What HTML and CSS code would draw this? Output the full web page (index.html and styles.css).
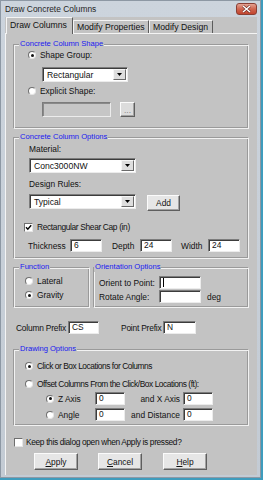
FILE: index.html
```html
<!DOCTYPE html>
<html lang="en">
<head>
    <meta charset="UTF-8">
    <title>Draw Concrete Columns</title>
    <link rel="stylesheet" href="styles.css">
</head>
<body>
<div class="window">
    <div class="titlebar">
        <span class="title">Draw Concrete Columns</span>
        <span class="close">
            <svg width="11" height="8" viewBox="0 0 11 8">
                <path d="M2 1 L9 7 M9 1 L2 7" stroke="#6b2a22" stroke-width="2.6"/>
                <path d="M2 1 L9 7 M9 1 L2 7" stroke="#fff" stroke-width="1.5"/>
            </svg>
        </span>
    </div>
    <div class="client">
        <div class="tabs">
            <div class="tab active tab-draw">Draw Columns</div>
            <div class="tab tab-props">Modify Properties</div>
            <div class="tab tab-design">Modify Design</div>
        </div>
        <div class="panel">
            <!-- shape -->
            <fieldset class="group shape-group">
                <legend>Concrete Column Shape</legend>
                <div class="option"><span class="radio on"></span>Shape Group:</div>
                <div class="select shape-select"><span class="value">Rectangular</span><span class="arrow"><svg width="5" height="3" viewBox="0 0 5 3"><path d="M0 0 H5 L2.5 3 Z" fill="#000"/></svg></span></div>
                <div class="option explicit"><span class="radio"></span>Explicit Shape:</div>
                <div class="explicit-row">
                    <span class="field disabled explicit-field"></span>
                    <span class="btn dots">...</span>
                </div>
            </fieldset>

            <!-- options -->
            <fieldset class="group options-group">
                <legend>Concrete Column Options</legend>
                <div class="caption">Material:</div>
                <div class="select wide-select material"><span class="value">Conc3000NW</span><span class="arrow"><svg width="5" height="3" viewBox="0 0 5 3"><path d="M0 0 H5 L2.5 3 Z" fill="#000"/></svg></span></div>
                <div class="caption rules-caption">Design Rules:</div>
                <div class="rules-row">
                    <div class="select wide-select"><span class="value">Typical</span><span class="arrow"><svg width="5" height="3" viewBox="0 0 5 3"><path d="M0 0 H5 L2.5 3 Z" fill="#000"/></svg></span></div>
                    <span class="btn add-btn">Add</span>
                </div>
                <div class="check-row">
                    <span class="checkbox"><svg width="7" height="7" viewBox="0 0 7 7"><path d="M1 3.2 L2.8 5.2 L6.2 1.2" stroke="#000" stroke-width="1.4" fill="none"/></svg></span>
                    <span class="tight">Rectangular Shear Cap (in)</span>
                </div>
                <div class="dims-row">
                    <span class="dim-label thickness">Thickness</span>
                    <span class="field dim">6</span>
                    <span class="dim-label depth">Depth</span>
                    <span class="field dim">24</span>
                    <span class="dim-label width">Width</span>
                    <span class="field dim">24</span>
                </div>
            </fieldset>

            <!-- function / orientation -->
            <div class="pair">
                <fieldset class="group function-group">
                    <legend>Function</legend>
                    <div class="option"><span class="radio"></span>Lateral</div>
                    <div class="option gravity"><span class="radio on"></span>Gravity</div>
                </fieldset>
                <fieldset class="group orient-group">
                    <legend>Orientation Options</legend>
                    <div class="orient-row">
                        <span class="orient-label">Orient to Point:</span>
                        <span class="field orient-field"><span class="caret"></span></span>
                    </div>
                    <div class="orient-row rotate">
                        <span class="orient-label">Rotate Angle:</span>
                        <span class="field orient-field"></span>
                        <span class="unit">deg</span>
                    </div>
                </fieldset>
            </div>

            <div class="prefix-row">
                <span class="prefix-label column-prefix">Column Prefix</span>
                <span class="field prefix-field">CS</span>
                <span class="prefix-label point-prefix">Point Prefix</span>
                <span class="field point-field">N</span>
            </div>

            <!-- drawing -->
            <fieldset class="group drawing-group">
                <legend>Drawing Options</legend>
                <div class="option"><span class="radio on"></span><span class="tighter">Click or Box Locations for Columns</span></div>
                <div class="option offset"><span class="radio"></span><span class="tighter">Offset Columns From the Click/Box Locations (ft):</span></div>
                <div class="offset-row">
                    <div class="option sub-option"><span class="radio on"></span>Z Axis</div>
                    <span class="field offset-field">0</span>
                    <span class="offset-label">and X Axis</span>
                    <span class="field offset-field">0</span>
                </div>
                <div class="offset-row angle-row">
                    <div class="option sub-option"><span class="radio"></span>Angle</div>
                    <span class="field offset-field">0</span>
                    <span class="offset-label">and Distance</span>
                    <span class="field offset-field">0</span>
                </div>
            </fieldset>

            <div class="keep-row">
                <span class="checkbox"></span>
                <span class="tight">Keep this dialog open when Apply is pressed?</span>
            </div>

            <div class="button-row">
                <span class="btn action"><u>A</u>pply</span>
                <span class="btn action"><u>C</u>ancel</span>
                <span class="btn action"><u>H</u>elp</span>
            </div>
        </div>
    </div>
</div>
</body>
</html>
```

FILE: styles.css
```css
/* dialog window */
* {
    box-sizing: border-box;
}
body {
    margin: 0;
    background: #3e9cbd;
    font-family: "Liberation Sans", Arial, sans-serif;
    font-size: 8.4px;
    color: #111;
}
.window {
    width: 261px;
    height: 478px;
    display: flex;
    flex-direction: column;
    background: linear-gradient(#ccd4dd, #c3cbd4);
    border: 1px solid #8d98a4;
    padding: 0 3px 2px 4px;
}
.titlebar {
    height: 16px;
    display: flex;
    align-items: center;
    justify-content: space-between;
}
.title {
    font-size: 8.4px;
    color: #262626;
}
.close {
    width: 21px;
    height: 12px;
    display: flex;
    align-items: center;
    justify-content: center;
    border: 1px solid #8a3f34;
    border-radius: 3px;
    background: linear-gradient(#e4a393, #cf6550 50%, #c2452f);
}
.client {
    flex: 1;
    background: #c3c3c3;
    display: flex;
    flex-direction: column;
}

/* tabs */
.tabs {
    display: flex;
    align-items: flex-end;
    height: 16px;
    padding-left: 1px;
}
.tab {
    height: 13px;
    padding-left: 3px;
    border-top: 1px solid #f4f4f4;
    border-left: 1px solid #f4f4f4;
    border-right: 1px solid #5c5c5c;
    font-size: 8.7px;
    line-height: 12px;
    white-space: nowrap;
}
.tab.active {
    height: 17px;
    margin-bottom: -1px;
    background: #c3c3c3;
    line-height: 14px;
    position: relative;
}
.tab-draw { width: 67px; }
.tab-props { width: 76px; }
.tab-design { width: 64px; }

.panel {
    flex: 1;
    border-top: 1px solid #f4f4f4;
    border-left: 1px solid #f4f4f4;
    padding: 5px 0 0 7px;
    display: flex;
    flex-direction: column;
    align-items: flex-start;
}

/* group boxes */
.group {
    margin: 0;
    padding: 0;
    min-width: 0;
    width: 236px;
    border: 1px solid;
    border-color: #9a9a9a #f2f2f2 #f2f2f2 #9a9a9a;
    box-shadow: inset 1px 1px 0 #f2f2f2, inset -1px -1px 0 #9a9a9a;
}
.group legend {
    padding: 0 1px;
    font-size: 7.6px;
    line-height: 10px;
    color: #1818f0;
    background: #c3c3c3;
}

/* controls */
.option {
    display: flex;
    align-items: center;
    gap: 4px;
    height: 10px;
    line-height: 10px;
    white-space: nowrap;
}
.radio {
    width: 8px;
    height: 8px;
    flex: none;
    border-radius: 50%;
    background: #fff;
    border: 1px solid;
    border-color: #6f6f6f #e6e6e6 #e6e6e6 #6f6f6f;
    display: flex;
    align-items: center;
    justify-content: center;
}
.radio.on::after {
    content: "";
    width: 3px;
    height: 3px;
    border-radius: 50%;
    background: #111;
}
.checkbox {
    width: 9px;
    height: 9px;
    flex: none;
    background: #fff;
    border: 1px solid;
    border-color: #6f6f6f #e6e6e6 #e6e6e6 #6f6f6f;
    display: flex;
    align-items: center;
    justify-content: center;
}
.field {
    display: block;
    height: 13px;
    background: #fff;
    border: 1px solid;
    border-color: #7c7c7c #ececec #ececec #7c7c7c;
    box-shadow: inset 1px 1px 0 #3c3c3c;
    padding-left: 3px;
    line-height: 11px;
    flex: none;
}
.field.disabled {
    background: #c6c6c6;
    box-shadow: inset 1px 1px 0 #8a8a8a;
}
.select {
    display: flex;
    height: 15px;
    background: #fff;
    border: 1px solid;
    border-color: #7c7c7c #ececec #ececec #7c7c7c;
    box-shadow: inset 1px 1px 0 #3c3c3c;
    padding: 1px;
}
.select .value {
    flex: 1;
    padding-left: 3px;
    font-size: 8.6px;
    line-height: 12px;
}
.select .arrow {
    width: 13px;
    background: #dedede;
    border: 1px solid;
    border-color: #f6f6f6 #6a6a6a #6a6a6a #f6f6f6;
    display: flex;
    align-items: center;
    justify-content: center;
}
.btn {
    display: flex;
    align-items: center;
    justify-content: center;
    background: #e6e6e6;
    border: 1px solid;
    border-color: #fbfbfb #5e5e5e #5e5e5e #fbfbfb;
    box-shadow: inset -1px -1px 0 #a2a2a2;
    font-size: 8.4px;
}
.tight {
    letter-spacing: -0.35px;
}
.tighter {
    letter-spacing: -0.45px;
}

/* shape group */
.shape-group {
    padding: 1px 0 11px 14px;
}
.shape-group legend {
    margin-left: -9px;
}
.shape-select {
    width: 86px;
    margin: 7px 0 0 14px;
}
.explicit {
    margin-top: 4px;
}
.explicit-row {
    display: flex;
    gap: 9px;
    margin: 6px 0 0 14px;
}
.explicit-field {
    width: 69px;
    height: 15px;
}
.dots {
    width: 15px;
    height: 15px;
    color: #8a8a8a;
    background: #dcdcdc;
}

/* options group */
.options-group {
    margin-top: 3px;
    padding: 2px 0 6px 10px;
}
.options-group legend {
    margin-left: -5px;
}
.caption {
    height: 10px;
    line-height: 10px;
    margin-left: 5px;
}
.material {
    margin: 4px 0 0 5px;
}
.wide-select {
    width: 107px;
}
.rules-caption {
    margin-top: 6px;
}
.rules-row {
    display: flex;
    align-items: flex-start;
    margin: 5px 0 0 5px;
}
.add-btn {
    width: 33px;
    height: 16px;
    margin: 1px 0 0 11px;
}
.check-row {
    display: flex;
    align-items: center;
    gap: 4px;
    height: 10px;
    margin-top: 11px;
}
.dims-row {
    display: flex;
    align-items: center;
    height: 13px;
    margin: 7px 0 0 4px;
}
.dim {
    width: 32px;
}
.thickness { width: 42px; }
.depth { width: 28px; margin-left: 10px; }
.width { width: 27px; margin-left: 9px; }

/* function / orientation */
.pair {
    display: flex;
    gap: 3px;
    margin-top: 3px;
}
.function-group {
    width: 77px;
    padding: 4px 0 7px 11px;
}
.function-group legend {
    margin-left: -6px;
}
.gravity {
    margin-top: 4px;
}
.orient-group {
    width: 156px;
    padding: 4px 0 4px 5px;
}
.orient-group legend {
    margin-left: -5px;
}
.orient-row {
    display: flex;
    align-items: center;
    height: 13px;
}
.orient-row.rotate {
    margin-top: 1px;
}
.orient-label {
    width: 60px;
}
.orient-field {
    width: 42px;
}
.caret {
    display: block;
    width: 1px;
    height: 9px;
    margin-top: 1px;
    background: #000;
}
.unit {
    margin-left: 6px;
}

/* prefixes */
.prefix-row {
    display: flex;
    align-items: center;
    height: 13px;
    margin-top: 13px;
    padding-left: 3px;
}
.column-prefix { width: 52px; letter-spacing: -0.2px; }
.prefix-field { width: 31px; }
.point-prefix { width: 42px; margin-left: 22px; letter-spacing: -0.2px; }
.point-field { width: 33px; }

/* drawing options */
.drawing-group {
    margin-top: 10px;
    padding: 7px 0 4px 11px;
}
.drawing-group legend {
    margin-left: -6px;
}
.offset {
    margin-top: 8px;
}
.offset-row {
    display: flex;
    align-items: center;
    height: 13px;
    margin: 3px 0 0 21px;
}
.angle-row {
    margin-top: 3px;
}
.sub-option {
    width: 49px;
}
.offset-field {
    width: 30px;
}
.offset-label {
    width: 58px;
    padding-right: 3px;
    text-align: right;
    white-space: nowrap;
}

/* bottom */
.keep-row {
    display: flex;
    align-items: center;
    gap: 3px;
    height: 10px;
    margin: 11px 0 0 1px;
}
.button-row {
    display: flex;
    gap: 20px;
    margin: 6px 0 0 21px;
}
.action {
    width: 44px;
    height: 17px;
}
.action + .action + .action {
    margin-left: 1px;
}
```
